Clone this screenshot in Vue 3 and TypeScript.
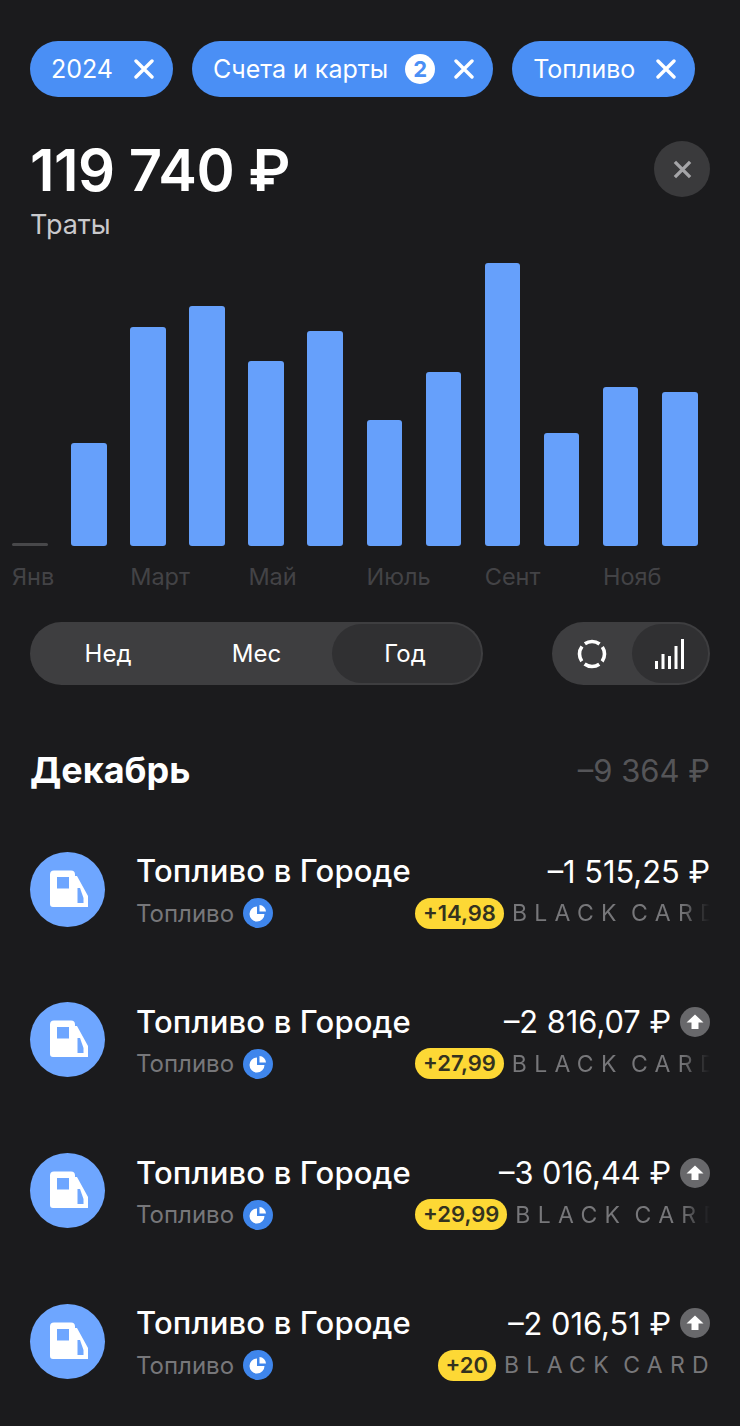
<script setup lang="ts">
interface Operation {
  amount: string;
  cashback: string;
  up: boolean;
}

const bars = [3, 103, 219, 240, 185, 215, 126, 174, 283, 113, 159, 154];
const months = ["Янв", "Март", "Май", "Июль", "Сент", "Нояб"];

const operations: Operation[] = [
  { amount: "–1 515,25 ₽", cashback: "+14,98", up: false },
  { amount: "–2 816,07 ₽", cashback: "+27,99", up: true },
  { amount: "–3 016,44 ₽", cashback: "+29,99", up: true },
  { amount: "–2 016,51 ₽", cashback: "+20", up: true },
];
</script>

<template>
  <div class="page">
    <div class="chips">
      <div class="chip">
        <span>2024</span>
        <svg class="chip-x" viewBox="0 0 20 20"><path d="M2 2 18 18M18 2 2 18" /></svg>
      </div>
      <div class="chip">
        <span>Счета и карты</span>
        <span class="chip-count">2</span>
        <svg class="chip-x" viewBox="0 0 20 20"><path d="M2 2 18 18M18 2 2 18" /></svg>
      </div>
      <div class="chip">
        <span>Топливо</span>
        <svg class="chip-x" viewBox="0 0 20 20"><path d="M2 2 18 18M18 2 2 18" /></svg>
      </div>
    </div>

    <div class="total">
      <div>
        <div class="total-value">119 740 ₽</div>
        <div class="total-label">Траты</div>
      </div>
      <button class="close">
        <svg viewBox="0 0 20 20"><path d="M2 2 18 18M18 2 2 18" /></svg>
      </button>
    </div>

    <div class="chart">
      <div
        v-for="(h, i) in bars"
        :key="i"
        class="bar"
        :class="{ empty: i === 0 }"
        :style="{ height: h + 'px' }"
      ></div>
    </div>
    <div class="months">
      <span v-for="m in months" :key="m">{{ m }}</span>
    </div>

    <div class="controls">
      <div class="segment">
        <span>Нед</span>
        <span>Мес</span>
        <span class="active">Год</span>
      </div>
      <div class="toggle">
        <span class="toggle-item">
          <svg width="32" height="32" viewBox="0 0 32 32">
            <circle cx="16" cy="16" r="12.5" fill="none" stroke="#fff" stroke-width="3.6" stroke-dasharray="15.6 4" stroke-dashoffset="-11.800" />
          </svg>
        </span>
        <span class="toggle-item active">
          <svg width="32" height="32" viewBox="0 0 32 32">
            <rect x="1" y="23" width="3" height="8" fill="#fff" />
            <rect x="7.5" y="16" width="3" height="15" fill="#fff" />
            <rect x="14" y="18" width="3" height="13" fill="#fff" />
            <rect x="20.5" y="8" width="3" height="23" fill="#fff" />
            <rect x="27" y="1" width="3" height="30" fill="#fff" />
          </svg>
        </span>
      </div>
    </div>

    <div class="month-head">
      <h2>Декабрь</h2>
      <span>–9 364 ₽</span>
    </div>

    <div class="list">
      <div v-for="(op, i) in operations" :key="i" class="op">
        <div class="op-icon">
          <svg viewBox="0 0 75 75" width="75" height="75">
            <path fill="#fff" d="M24 18.5H41a4 4 0 0 1 4 4V24h2L58 44V55H23a3 3 0 0 1-3-3V22.500a4 4 0 0 1 4-4Z" />
            <rect x="27" y="25" width="12" height="11.500" fill="#6ea6ff" />
            <path fill="#6ea6ff" d="M47.500 36H50L53.500 46V51H47.500Z" />
          </svg>
        </div>
        <div class="op-info">
          <div class="op-title">Топливо в Городе</div>
          <div class="op-sub">
            <span>Топливо</span>
            <svg class="pie" viewBox="0 0 30 30" width="30" height="30">
              <circle cx="15" cy="15" r="15" fill="#3f86ec" />
              <path fill="#fff" d="M14 8.500V16h7.500A7.500 7.500 0 1 1 14 8.500Z" />
              <path fill="#fff" d="M16.500 7A7 7 0 0 1 23 13.500H16.500Z" />
            </svg>
          </div>
        </div>
        <div class="op-right">
          <div class="op-amount">
            <span>{{ op.amount }}</span>
            <svg v-if="op.up" class="up" viewBox="0 0 30 30" width="30" height="30">
              <circle cx="15" cy="15" r="15" fill="#68686b" />
              <path fill="#fff" d="M15 7.500 23.500 15.500H18.500V22H11.500V15.500H6.500Z" />
            </svg>
          </div>
          <div class="op-card">
            <span class="cashback">{{ op.cashback }}</span>
            <span class="card-name">BLACK CARD</span>
          </div>
        </div>
      </div>
    </div>
  </div>
</template>

<style>
html,
body {
  background: #1b1b1d;
}
</style>

<style scoped>
.page {
  width: 740px;
  height: 1426px;
  box-sizing: border-box;
  padding: 41px 30px 0;
  background: #1b1b1d;
  color: #fff;
  font-family: Inter, "Liberation Sans", sans-serif;
  overflow: hidden;
}

.chips {
  display: flex;
  gap: 19px;
}
.chip {
  height: 56px;
  padding: 0 19px 0 21px;
  display: flex;
  align-items: center;
  gap: 21px;
  border-radius: 28px;
  background: #4a8ff5;
  font-size: 25px;
  white-space: nowrap;
}
.chip-x {
  width: 20px;
  height: 20px;
  fill: none;
  stroke: #fff;
  stroke-width: 3.400;
  stroke-linecap: round;
}
.chip-count {
  width: 30px;
  height: 30px;
  margin: 0 -2px 0 -4px;
  border-radius: 50%;
  background: #fff;
  color: #4a8ff5;
  font-size: 22px;
  font-weight: 700;
  display: flex;
  align-items: center;
  justify-content: center;
}

.total {
  margin-top: 44px;
  display: flex;
  justify-content: space-between;
  align-items: flex-start;
}
.total-value {
  font-size: 58px;
  line-height: 58px;
  font-weight: 600;
  letter-spacing: -0.5px;
}
.total-label {
  margin-top: 11px;
  font-size: 27px;
  line-height: 30px;
  color: #c9c9cc;
}
.close {
  width: 56px;
  height: 56px;
  padding: 0;
  border: none;
  border-radius: 50%;
  background: #3a3a3c;
  display: flex;
  align-items: center;
  justify-content: center;
}
.close svg {
  width: 19px;
  height: 19px;
  fill: none;
  stroke: #a5a5a8;
  stroke-width: 3.500;
}

.chart {
  height: 306px;
  margin: 0 -18px;
  display: grid;
  grid-template-columns: repeat(12, 35.500px);
  column-gap: 23.600px;
  align-items: end;
}
.bar {
  border-radius: 3px;
  background: #66a0fb;
}
.bar.empty {
  background: #48484a;
}
.months {
  margin: 16px -18px 0;
  display: grid;
  grid-template-columns: repeat(6, 118.200px);
  font-size: 23.500px;
  line-height: 30px;
  color: #434346;
}

.controls {
  margin-top: 30px;
  display: flex;
  justify-content: space-between;
}
.segment {
  width: 453px;
  height: 63px;
  border-radius: 32px;
  background: #3e3e40;
  display: grid;
  grid-template-columns: 151px 151px 151px;
  align-items: center;
  font-size: 24px;
  text-align: center;
}
.segment span {
  line-height: 59px;
}
.segment span:first-child {
  padding-left: 5px;
}
.segment .active {
  margin: 2px 2px 2px 0;
  padding-right: 3px;
  border-radius: 30px;
  background: #303032;
}
.toggle {
  width: 158px;
  height: 63px;
  border-radius: 32px;
  background: #3e3e40;
  display: grid;
  grid-template-columns: 80px 78px;
}
.toggle-item {
  display: flex;
  align-items: center;
  justify-content: center;
}
.toggle-item.active {
  margin: 2px 2px 2px 0;
  border-radius: 30px;
  background: #303032;
}

.month-head {
  margin-top: 62px;
  display: flex;
  justify-content: space-between;
  align-items: center;
}
.month-head h2 {
  margin: 0;
  font-size: 36px;
  line-height: 46px;
  font-weight: 700;
}
.month-head span {
  font-size: 31px;
  color: #555558;
}

.list {
  margin-top: 58.500px;
  display: flex;
  flex-direction: column;
  gap: 75.800px;
}
.op {
  height: 75px;
  display: flex;
  align-items: center;
}
.op-icon {
  width: 75px;
  height: 75px;
  flex: none;
  border-radius: 50%;
  background: #6ea6ff;
}
.op-icon svg {
  display: block;
}
.op-info {
  margin-left: 31px;
  padding-top: 2px;
  flex: none;
}
.op-title {
  font-size: 31px;
  line-height: 38px;
  font-weight: 500;
  letter-spacing: 0.150px;
  white-space: nowrap;
}
.op-sub {
  margin-top: 8px;
  height: 30px;
  display: flex;
  align-items: center;
  gap: 9px;
  font-size: 24px;
  color: #77777a;
}
.op-right {
  margin-left: auto;
  padding-top: 2px;
  width: 295px;
  flex: none;
}
.op-amount {
  height: 38px;
  display: flex;
  justify-content: flex-end;
  align-items: center;
  gap: 9px;
  font-size: 30.800px;
  white-space: nowrap;
}
.op-card {
  margin-top: 8px;
  height: 30px;
  display: flex;
  justify-content: flex-end;
  align-items: center;
  gap: 8px;
}
.cashback {
  flex: none;
  height: 31px;
  padding: 0 8px;
  border-radius: 16px;
  background: #fdd835;
  color: #33321f;
  font-size: 22px;
  line-height: 31px;
  font-weight: 600;
}
.card-name {
  min-width: 0;
  margin-right: -6px;
  overflow: hidden;
  white-space: nowrap;
  font-size: 23px;
  letter-spacing: 7.300px;
  word-spacing: -6.500px;
  color: #77777a;
  -webkit-mask-image: linear-gradient(to left, transparent 6px, #000 35px);
  mask-image: linear-gradient(to left, transparent 6px, #000 35px);
}
.op:last-child .card-name {
  -webkit-mask-image: none;
  mask-image: none;
}
</style>
